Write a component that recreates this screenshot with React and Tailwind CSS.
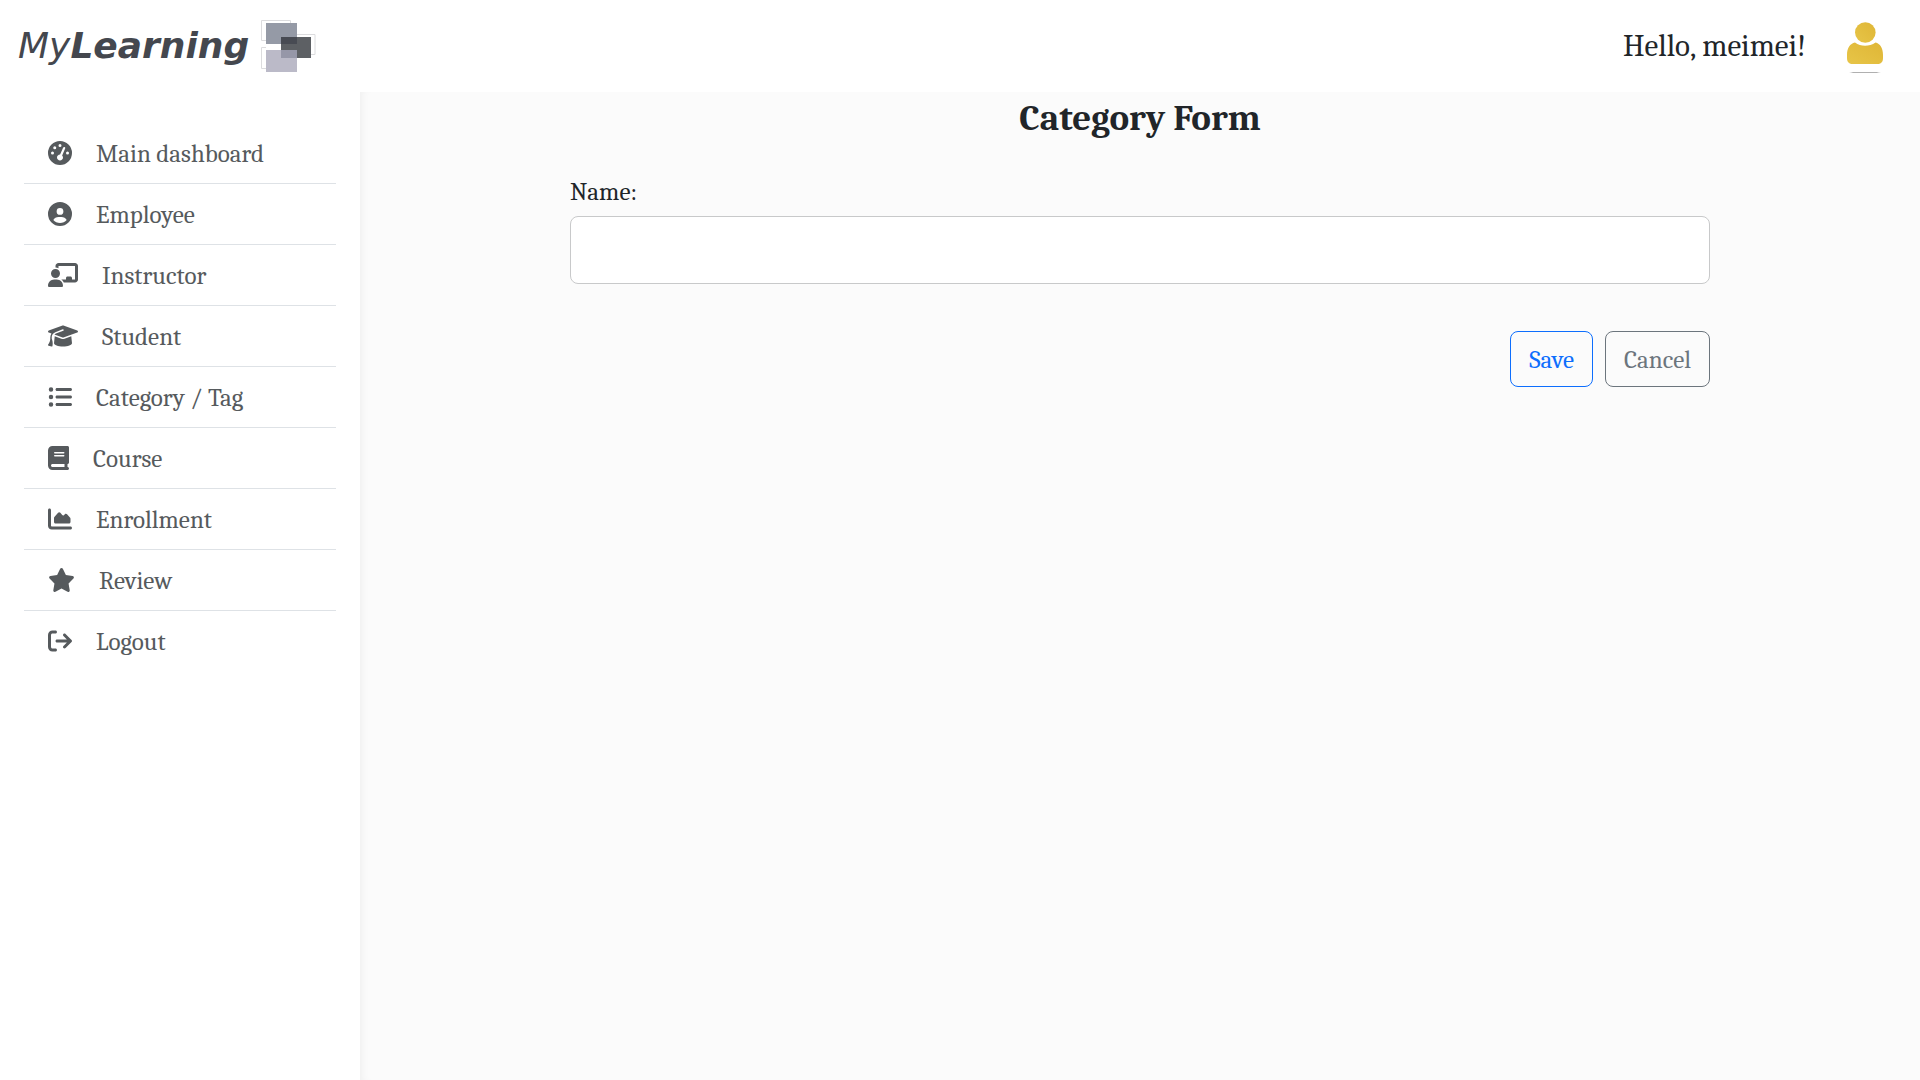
import {
  FaGaugeHigh,
  FaCircleUser,
  FaChalkboardUser,
  FaGraduationCap,
  FaListUl,
  FaBook,
  FaChartArea,
  FaStar,
  FaArrowRightFromBracket,
} from "react-icons/fa6";

const links = [
  { label: "Main dashboard", Icon: FaGaugeHigh, size: "w-6" },
  { label: "Employee", Icon: FaCircleUser, size: "w-6" },
  { label: "Instructor", Icon: FaChalkboardUser, size: "w-[30px]" },
  { label: "Student", Icon: FaGraduationCap, size: "w-[30px]" },
  { label: "Category / Tag", Icon: FaListUl, size: "w-6" },
  { label: "Course", Icon: FaBook, size: "w-[21px]" },
  { label: "Enrollment", Icon: FaChartArea, size: "w-6" },
  { label: "Review", Icon: FaStar, size: "w-[27px]" },
  { label: "Logout", Icon: FaArrowRightFromBracket, size: "w-6" },
];

function LogoMark() {
  return (
    <svg className="h-[53px] w-[56px]" viewBox="0 0 56 53" aria-hidden="true">
      <g fill="none" stroke="#dcdcde">
        <path d="M5 20.500H.5V.5h29V3M5 48.500H.5V27.500H5" />
        <path d="M36 14.500h18v20h-4" />
      </g>
      <rect x="5" y="3" width="31" height="21" fill="#959aa6" />
      <rect x="20" y="17" width="30" height="21" fill="#5d6064" />
      <rect x="20" y="17" width="16" height="7" fill="#484b53" />
      <rect x="5" y="30" width="31" height="22" fill="#bbbac8" />
      <rect x="20" y="30" width="16" height="8" fill="#9697a8" />
    </svg>
  );
}

function Avatar() {
  return (
    <svg className="h-[54px] w-[38px]" viewBox="0 0 38 54" aria-hidden="true">
      <defs>
        <linearGradient id="gold" x1="0" y1="1" x2="1" y2="0">
          <stop offset="0" stopColor="#e7c548" />
          <stop offset="1" stopColor="#dfb636" />
        </linearGradient>
      </defs>
      <circle cx="19.300" cy="13.500" r="10.300" fill="url(#gold)" />
      <path
        d="M9 23.500C12 26 15.500 26.700 19 26.700S26.500 26 29.500 23.500C34 24.500 37 29 37 36v3c0 4-2 6-6 6H7c-4 0-6-2-6-6v-3c0-7 3-11.500 8-12.500Z"
        fill="url(#gold)"
      />
      <path d="M3 53.200c3-.4 28-.4 32 0l-7 1.300H10Z" fill="#b0b0b0" />
    </svg>
  );
}

export default function App() {
  return (
    <div className="flex min-h-screen flex-col bg-white font-[Cambria,Caladea,'Liberation_Serif',serif] text-[25px] text-[#212529]">
      <header className="flex h-[92px] items-center justify-between pr-9 pl-[18px]">
        <a href="#" className="flex items-center gap-3 font-['DejaVu_Sans',sans-serif] text-[36px] leading-none text-[#44474e] italic">
          <span>
            My<b>Learning</b>
          </span>
          <LogoMark />
        </a>
        <div className="flex items-center gap-10">
          <span className="text-[31px]">Hello, meimei!</span>
          <Avatar />
        </div>
      </header>
      <div className="flex grow">
        <nav className="w-[360px] shrink-0 px-6 pt-[31px]">
          <ul className="divide-y divide-[#dee2e6]">
            {links.map(({ label, Icon, size }) => (
              <li key={label}>
                <a href="#" className="flex h-15 items-center gap-6 px-6 text-[#565a5d]">
                  <Icon className={`h-6 ${size}`} />
                  <span className="pt-0.5">{label}</span>
                </a>
              </li>
            ))}
          </ul>
        </nav>
        <main className="grow bg-[#fbfbfb] shadow-[inset_8px_0_8px_-6px_#0000000d]">
          <form className="mx-auto w-full max-w-[1140px] pt-1">
            <h1 className="text-center text-[37px] leading-[44px] font-bold">Category Form</h1>
            <label htmlFor="name" className="mt-[34px] mb-1.5 block leading-9">
              Name:
            </label>
            <input
              id="name"
              type="text"
              className="block h-17 w-full rounded-lg border border-[#c8c9ca] bg-white px-4"
            />
            <div className="mt-[47px] flex justify-end gap-3">
              <button type="button" className="h-14 rounded-lg border border-[#0d6efd] px-[18px] pt-0.5 text-[#0d6efd]">
                Save
              </button>
              <button type="button" className="h-14 rounded-lg border border-[#6c757d] px-[18px] pt-0.5 text-[#6c757d]">
                Cancel
              </button>
            </div>
          </form>
        </main>
      </div>
    </div>
  );
}
